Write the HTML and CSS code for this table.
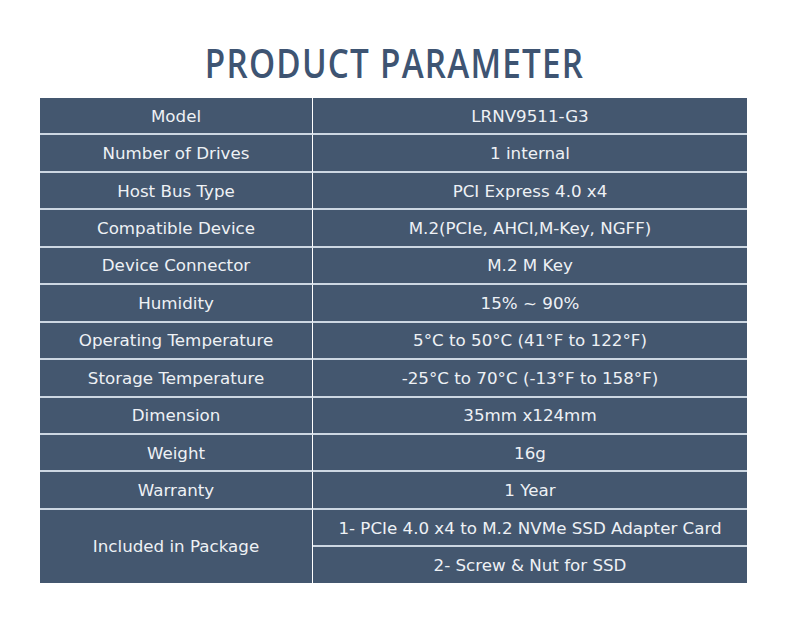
FILE: index.html
```html
<!DOCTYPE html>
<html>
<head>
<meta charset="utf-8">
<link rel="stylesheet" href="styles.css">
</head>
<body>
<div class="page">
  <h1 class="title">PRODUCT PARAMETER</h1>
  <table class="params">
    <tr><td class="k">Model</td><td class="v">LRNV9511-G3</td></tr>
    <tr><td class="k">Number of Drives</td><td class="v">1 internal</td></tr>
    <tr><td class="k">Host Bus Type</td><td class="v">PCI Express 4.0 x4</td></tr>
    <tr><td class="k">Compatible Device</td><td class="v">M.2(PCIe, AHCI,M-Key, NGFF)</td></tr>
    <tr><td class="k">Device Connector</td><td class="v">M.2 M Key</td></tr>
    <tr><td class="k">Humidity</td><td class="v">15% ~ 90%</td></tr>
    <tr><td class="k">Operating Temperature</td><td class="v">5°C to 50°C (41°F to 122°F)</td></tr>
    <tr><td class="k">Storage Temperature</td><td class="v">-25°C to 70°C (-13°F to 158°F)</td></tr>
    <tr><td class="k">Dimension</td><td class="v">35mm x124mm</td></tr>
    <tr><td class="k">Weight</td><td class="v">16g</td></tr>
    <tr><td class="k">Warranty</td><td class="v">1 Year</td></tr>
    <tr><td class="k last" rowspan="2">Included in Package</td><td class="v">1- PCIe 4.0 x4 to M.2 NVMe SSD Adapter Card</td></tr>
    <tr><td class="v last">2- Screw &amp; Nut for SSD</td></tr>
  </table>
</div>
</body>
</html>
```
FILE: styles.css
```css
html, body {
  margin: 0;
  padding: 0;
  background: #ffffff;
}
.page {
  width: 790px;
  padding-top: 38px;
  display: flex;
  flex-direction: column;
  align-items: center;
}
.title {
  margin: 0 0 10px 0;
  font-family: "Open Sans", sans-serif;
  font-weight: 600;
  font-size: 40px;
  line-height: 50px;
  letter-spacing: 1.5px;
  color: #3e5472;
  transform: scaleX(0.83);
}
.params {
  align-self: flex-start;
  margin-left: 40px;
  width: 707px;
  border-collapse: separate;
  border-spacing: 0;
  font-family: "DejaVu Sans", Verdana, sans-serif;
  font-size: 16.7px;
  color: #eef1f5;
}
.params td {
  background: #44576f;
  text-align: center;
  height: 35.45px;
  padding: 0;
  border-bottom: 2px solid #cdd7e2;
}
.params td.last {
  border-bottom: none;
}
.params td.k {
  width: 272px;
  border-right: 1px solid #ffffff;
}
```
